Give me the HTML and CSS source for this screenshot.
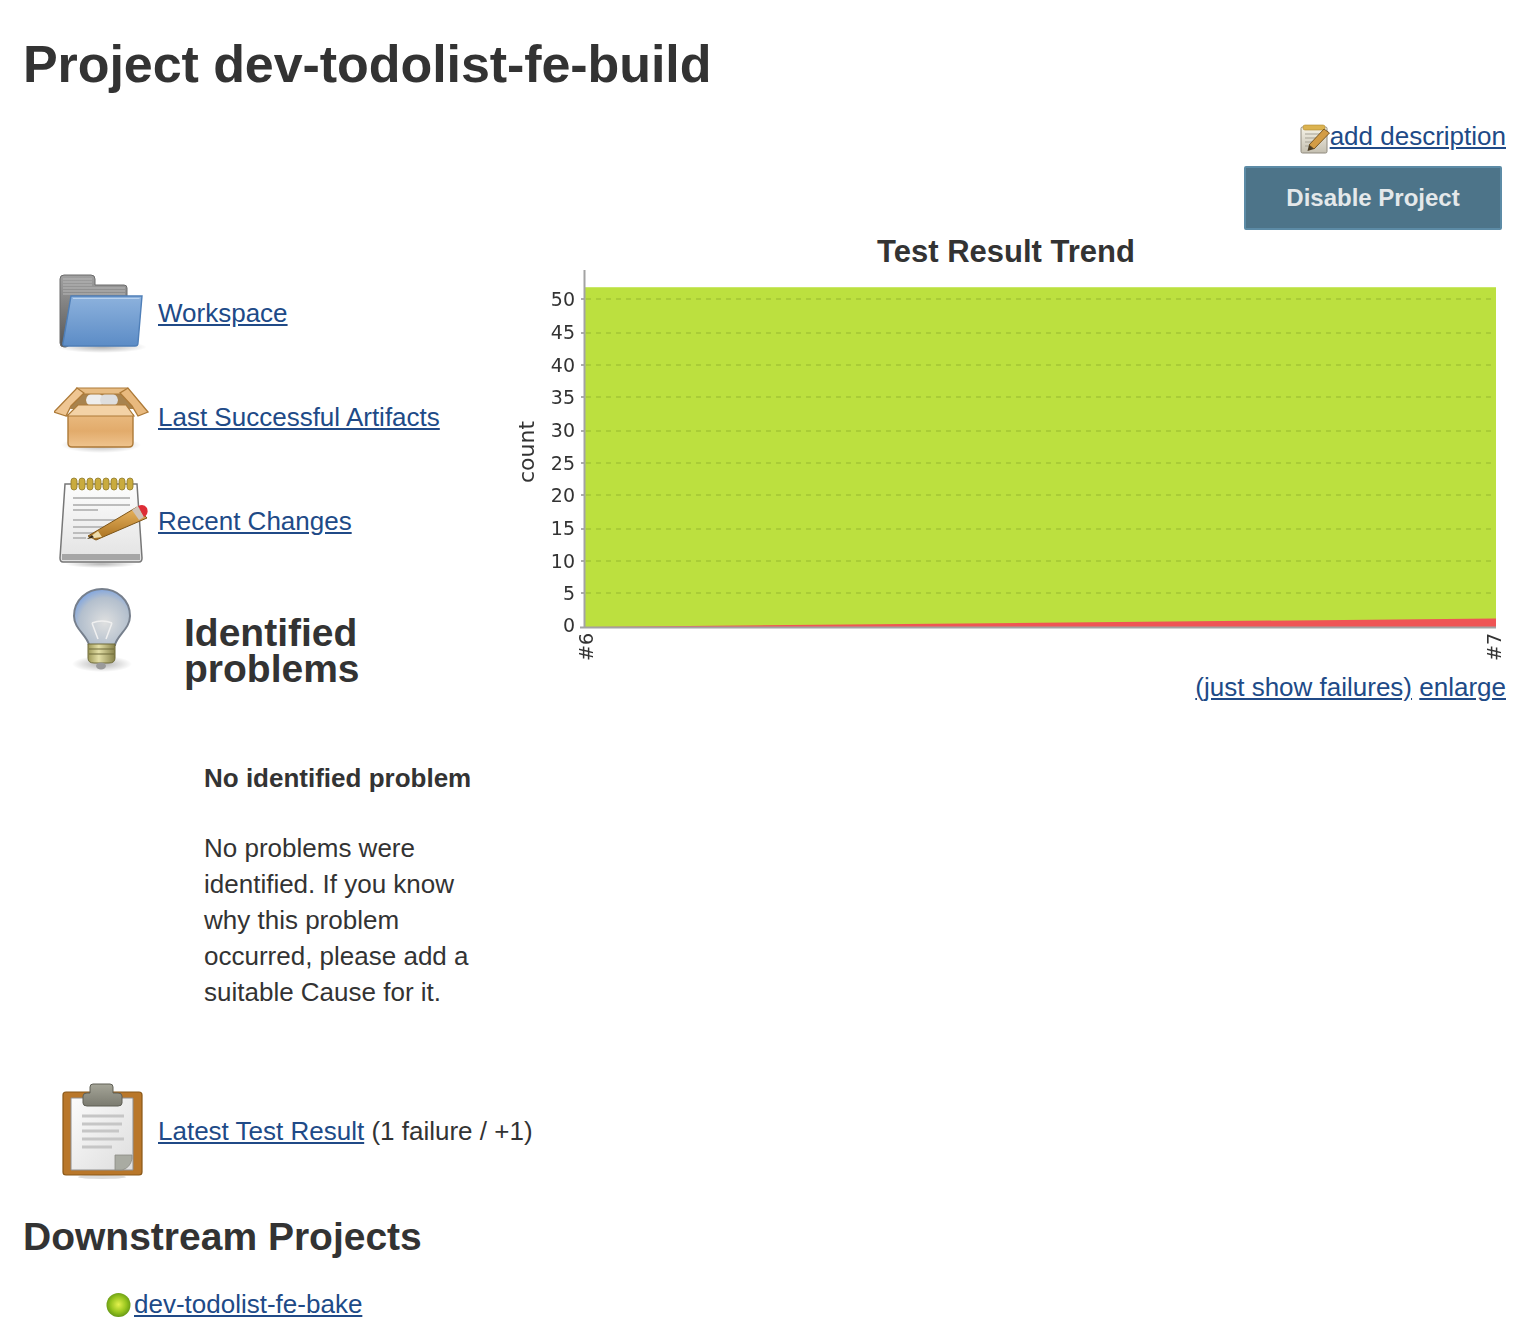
FILE: index.html
```html
<!DOCTYPE html>
<html lang="en">
<head>
<meta charset="utf-8">
<title>Project dev-todolist-fe-build</title>
<link rel="stylesheet" href="styles.css">
</head>
<body>
<h1 class="title">Project dev-todolist-fe-build</h1>
<div class="desc-row">
  <svg class="mini-note" viewBox="0 0 30 30" aria-hidden="true">
    <defs><linearGradient id="mn" x1="0" y1="0" x2="0" y2="1"><stop offset="0" stop-color="#f6f3e8"/><stop offset="1" stop-color="#c4bfb0"/></linearGradient></defs>
    <rect x="1" y="3" width="26" height="26" rx="1.5" fill="url(#mn)" stroke="#8f8a7e"/>
    <rect x="3" y="1" width="22" height="5" rx="2" fill="#dcb350" stroke="#b08a30" stroke-width=".6"/>
    <path d="M5 10h17M5 14h13M5 18h10M5 22h8" stroke="#a5a196" stroke-width="1.200"/>
    <path d="M9 21 L24 5 L29.500 9 L14 25 Z" fill="#d39c45" stroke="#6f4f1c" stroke-width=".9"/>
    <path d="M9 21 L7.500 27 L14 25 Z" fill="#4a3a20"/>
  </svg>
  <a href="#">add description</a>
</div>
<div class="btn-row"><button class="btn" type="button">Disable Project</button></div>

<div class="chart">
  <h3 class="chart-title">Test Result Trend</h3>
  <svg class="chart-svg" viewBox="506 270 1000 397" aria-label="Test result trend chart">
    <polygon points="584,287 1496,287 1496,627 584,627" fill="#bce03f"/>
    <line x1="584" y1="287.5" x2="1496" y2="287.5" stroke="#c9e86a" stroke-width="1"/>
    <polygon points="584,627 1496,618.500 1496,627" fill="#ef5555"/>
    <g class="grid">
      <line x1="586" x2="1496" y1="299" y2="299"/><line x1="586" x2="1496" y1="333" y2="333"/>
      <line x1="586" x2="1496" y1="365" y2="365"/><line x1="586" x2="1496" y1="397" y2="397"/>
      <line x1="586" x2="1496" y1="431" y2="431"/><line x1="586" x2="1496" y1="463" y2="463"/>
      <line x1="586" x2="1496" y1="495" y2="495"/><line x1="586" x2="1496" y1="529" y2="529"/>
      <line x1="586" x2="1496" y1="561" y2="561"/><line x1="586" x2="1496" y1="593" y2="593"/>
    </g>
    <g class="ticks">
      <line x1="581" x2="585" y1="299" y2="299"/><line x1="581" x2="585" y1="333" y2="333"/>
      <line x1="581" x2="585" y1="365" y2="365"/><line x1="581" x2="585" y1="397" y2="397"/>
      <line x1="581" x2="585" y1="431" y2="431"/><line x1="581" x2="585" y1="463" y2="463"/>
      <line x1="581" x2="585" y1="495" y2="495"/><line x1="581" x2="585" y1="529" y2="529"/>
      <line x1="581" x2="585" y1="561" y2="561"/><line x1="581" x2="585" y1="593" y2="593"/>
    </g>
    <line class="axis" x1="584.500" y1="270" x2="584.500" y2="628"/>
    <line class="axis" x1="580" y1="627.500" x2="1496" y2="627.500"/>
    <g class="ylab">
      <text x="575" y="306">50</text><text x="575" y="339">45</text><text x="575" y="372">40</text>
      <text x="575" y="404">35</text><text x="575" y="437">30</text><text x="575" y="470">25</text>
      <text x="575" y="502">20</text><text x="575" y="535">15</text><text x="575" y="568">10</text>
      <text x="575" y="600">5</text><text x="575" y="632">0</text>
    </g>
    <text class="count" transform="translate(534 483) rotate(-90)">count</text>
    <text class="xlab" transform="translate(593 661) rotate(-90)">#6</text>
    <text class="xlab" transform="translate(1501 661) rotate(-90)">#7</text>
  </svg>
  <div class="chart-links"><a href="#">(just show failures)</a> <a href="#">enlarge</a></div>
</div>

<div class="row first">
  <svg class="ico" viewBox="0 0 96 96" aria-hidden="true">
    <defs>
      <linearGradient id="fb" x1="0" y1="0" x2="0" y2="1"><stop offset="0" stop-color="#8db2dd"/><stop offset="1" stop-color="#5c8cc6"/></linearGradient>
      <linearGradient id="fg" x1="0" y1="0" x2="0" y2="1"><stop offset="0" stop-color="#a0a0a0"/><stop offset="1" stop-color="#555"/></linearGradient>
      <radialGradient id="sh"><stop offset="0" stop-color="#000" stop-opacity=".3"/><stop offset="1" stop-color="#000" stop-opacity="0"/></radialGradient>
    </defs>
    <ellipse cx="48" cy="82" rx="45" ry="6" fill="url(#sh)"/>
    <path d="M6 14 Q6 10 10 10 H37 Q41 10 41 14 V20 H70 Q73 20 73 23 V50 L12 82 H10 Q6 82 6 78 Z" fill="url(#fg)" stroke="#6a6a6a"/>
    <path d="M9 14H38M9 17H38M9 20H38M9 23H71M9 26H71M9 29H71" stroke="#b8b8b8" stroke-width="1"/>
    <path d="M17 31 H88 L84 78 Q84 81 81 81 H12 Q8 81 9 78 Z" fill="url(#fb)" stroke="#4f7fb8" stroke-width="1.400"/>
    <path d="M19 33.500 H85.500" stroke="#b8d2ef" stroke-width="1.200"/>
  </svg>
  <a href="#">Workspace</a>
</div>
<div class="row">
  <svg class="ico" viewBox="0 0 96 96" aria-hidden="true">
    <defs>
      <linearGradient id="bx" x1="0" y1="0" x2="0" y2="1"><stop offset="0" stop-color="#e9b97e"/><stop offset=".5" stop-color="#e2ab6b"/><stop offset="1" stop-color="#efc48e"/></linearGradient>
      <radialGradient id="sh2"><stop offset="0" stop-color="#000" stop-opacity=".3"/><stop offset="1" stop-color="#000" stop-opacity="0"/></radialGradient>
    </defs>
    <ellipse cx="47" cy="76" rx="40" ry="8" fill="url(#sh2)"/>
    <path d="M24 20 H72 L80 40 H16 Z" fill="#a8834e"/>
    <ellipse cx="41" cy="31" rx="9" ry="7" fill="#eeeeee"/><ellipse cx="55" cy="31" rx="9" ry="7" fill="#dedede"/>
    <path d="M22 19 H74 L70 25 H26 Z" fill="#e8bd84" stroke="#ad7a38" stroke-width="1"/>
    <path d="M0 43 L23 19 L30 24 L17 37 L12 47 Z" fill="#efc693" stroke="#ad7a38" stroke-width="1.300"/>
    <path d="M94 43 L74 19 L66 24 L78 37 L84 47 Z" fill="#e8b97e" stroke="#ad7a38" stroke-width="1.300"/>
    <path d="M14 46 H79 V74 Q79 78 75 78 H18 Q14 78 14 74 Z" fill="url(#bx)" stroke="#ad7a38" stroke-width="1.400"/>
    <path d="M24 36 H72 L80 47 H13 Z" fill="#f3d2a6" stroke="#ad7a38" stroke-width="1.200"/>
  </svg>
  <a href="#">Last Successful Artifacts</a>
</div>
<div class="row">
  <svg class="ico" viewBox="0 0 96 96" aria-hidden="true">
    <defs>
      <linearGradient id="np" x1="0" y1="0" x2="0" y2="1"><stop offset="0" stop-color="#fdfdfd"/><stop offset="1" stop-color="#e2e2e2"/></linearGradient>
      <linearGradient id="pc" x1="0" y1="0" x2="0" y2="1"><stop offset="0" stop-color="#eab560"/><stop offset="1" stop-color="#a8701f"/></linearGradient>
      <radialGradient id="sh3"><stop offset="0" stop-color="#000" stop-opacity=".28"/><stop offset="1" stop-color="#000" stop-opacity="0"/></radialGradient>
    </defs>
    <ellipse cx="47" cy="91" rx="36" ry="4" fill="url(#sh3)"/>
    <path d="M11 11 H83 L88 85 Q88 89 85 89 H9 Q6 89 6 85 Z" fill="url(#np)" stroke="#777" stroke-width="1.500"/>
    <path d="M8 81 H86 V87 H8 Z" fill="#a6a6a6"/>
    <g class="rings"><rect x="17" y="5" width="6" height="12" rx="3"/><rect x="25" y="5" width="6" height="12" rx="3"/><rect x="33" y="5" width="6" height="12" rx="3"/><rect x="41" y="5" width="6" height="12" rx="3"/><rect x="49" y="5" width="6" height="12" rx="3"/><rect x="57" y="5" width="6" height="12" rx="3"/><rect x="65" y="5" width="6" height="12" rx="3"/><rect x="73" y="5" width="6" height="12" rx="3"/></g>
    <path d="M19 25H76M19 32H76M19 37H44M19 47H64M19 54H52M19 60H42M19 65H32" stroke="#bcbcbc" stroke-width="2"/>
    <path d="M34 63 L83 34 L93 45 L42 67 Z" fill="url(#pc)" stroke="#7d5518" stroke-width="1"/>
    <path d="M33 66 L44 58 L48 64 Z" fill="#ecdcac"/>
    <path d="M33 66 L38 62 L40 64.500 Z" fill="#3a2c18"/>
    <path d="M78 37 L84 33 L90 44 L85 47 Z" fill="#cfc3b8"/>
    <path d="M84 33 Q90 30 93 35 Q95 41 90 44 Z" fill="#dd2d36"/>
  </svg>
  <a href="#">Recent Changes</a>
</div>
<div class="row-problems">
  <svg class="ico" viewBox="0 0 96 96" aria-hidden="true">
    <defs>
      <radialGradient id="gl" cx=".55" cy=".6" r=".62"><stop offset="0" stop-color="#dfe0e0"/><stop offset=".72" stop-color="#b3bfcd"/><stop offset="1" stop-color="#7ea4e0"/></radialGradient>
      <linearGradient id="bs" x1="0" y1="0" x2="1" y2="0"><stop offset="0" stop-color="#9d9858"/><stop offset=".4" stop-color="#e4dfa6"/><stop offset="1" stop-color="#86814a"/></linearGradient>
      <radialGradient id="sh4"><stop offset="0" stop-color="#000" stop-opacity=".3"/><stop offset="1" stop-color="#000" stop-opacity="0"/></radialGradient>
    </defs>
    <ellipse cx="48" cy="85" rx="30" ry="8" fill="url(#sh4)"/>
    <path d="M35 66 C33 56 20 50 20 37 C20 21 33 10 48 10 C63 10 76 21 76 37 C76 50 63 56 61 66 Z" fill="url(#gl)" stroke="#767f8c" stroke-width="2"/>
    <path d="M38 44 L44 60 M58 44 L52 60 M38 44 Q48 40 58 44" stroke="#f0f0f0" stroke-width="1.500" fill="none"/>
    <path d="M34 65 H61 V79 Q61 84 55 84 H40 Q34 84 34 79 Z" fill="url(#bs)" stroke="#6f6b3a" stroke-width="1"/>
    <path d="M35 70 H60 M35 75 H60" stroke="#6f6b3a" stroke-width="1"/>
    <ellipse cx="47" cy="87" rx="5" ry="3.500" fill="#9a9a9a"/>
  </svg>
  <h2 class="problems-title">Identified problems</h2>
</div>
<div class="problems-body">
  <b class="problems-lead">No identified problem</b>
  No problems were identified. If you know why this problem occurred, please add a suitable Cause for it.
</div>
<div class="row">
  <svg class="ico" viewBox="0 0 96 96" aria-hidden="true">
    <defs>
      <linearGradient id="cp" x1="0" y1="0" x2="1" y2="1"><stop offset="0" stop-color="#fbfbfb"/><stop offset="1" stop-color="#dedede"/></linearGradient>
      <linearGradient id="cl" x1="0" y1="0" x2="0" y2="1"><stop offset="0" stop-color="#a5a598"/><stop offset="1" stop-color="#7b7b70"/></linearGradient>
    </defs>
    <ellipse cx="48" cy="94" rx="24" ry="2" fill="#dcdcdc"/>
    <rect x="9" y="9" width="79" height="83" rx="3" fill="#b9772a" stroke="#8a5818" stroke-width="1.200"/>
    <path d="M17 15 H79 V87 H17 Z" fill="url(#cp)" stroke="#8f8f8f"/>
    <path d="M28 33H70M28 41H68M28 48H65M28 56H70M28 64H58" stroke="#c6c6c6" stroke-width="3"/>
    <path d="M61 87 V72 H78 V76 Q76 85 68 87 Z" fill="#a9aba2" stroke="#8c8c84" stroke-width=".8"/>
    <path d="M29 20 V13 Q29 10 33 10 H36 V4 Q36 1 39 1 H56 Q59 1 59 4 V10 H64 Q68 10 68 13 V20 Q68 23 64 23 H33 Q29 23 29 20 Z" fill="url(#cl)" stroke="#5f5f55" stroke-width="1"/>
  </svg>
  <span><a href="#">Latest Test Result</a> (1 failure / +1)</span>
</div>
<h2 class="sub">Downstream Projects</h2>
<ul class="down">
  <li>
    <svg class="ball" viewBox="0 0 28 28" aria-hidden="true">
      <defs><radialGradient id="bl" cx=".5" cy=".48" r=".55"><stop offset="0" stop-color="#e4f24e"/><stop offset=".6" stop-color="#96c41e"/><stop offset="1" stop-color="#5f9214"/></radialGradient></defs>
      <circle cx="12.500" cy="14" r="12" fill="url(#bl)"/>
    </svg><a href="#">dev-todolist-fe-bake</a>
  </li>
</ul>
</body>
</html>
```
FILE: styles.css
```css
html, body { background: #fff; }
body {
  margin: 0;
  padding: 0 26px 0 23px;
  font: 26px/36px "Liberation Sans", Arial, sans-serif;
  color: #333;
}
a { color: #204a87; text-decoration: underline; }
.title { font-size: 52px; letter-spacing: -.07px; line-height: 60px; margin: 0; padding-top: 34px; font-weight: 700; }
.desc-row { display: flex; justify-content: flex-end; align-items: flex-start; margin-top: 24px; height: 36px; }
.mini-note { width: 30px; height: 30px; margin-top: 6px; filter: blur(.4px); }
.btn-row { display: flex; justify-content: flex-end; margin-top: 12px; padding-right: 4px; }
.btn {
  width: 258px; height: 64px; padding: 0;
  background: #4d7489; border: 2px solid #5c8ba6; border-radius: 2px;
  color: #e4e8ea; font: 700 24px "Liberation Sans", Arial, sans-serif;
}
.chart { float: right; width: 1000px; }
.chart-title { font-size: 31px; line-height: 36px; margin: 0; padding-top: 4px; text-align: center; font-weight: 700; }
.chart-svg { display: block; width: 1000px; height: 397px; filter: blur(.45px); }
.grid line { stroke: #a2c536; stroke-width: 1.400; stroke-dasharray: 5 5; }
.ticks line { stroke: #8a8a8a; stroke-width: 1.400; }
.axis { stroke: #a3a3a3; stroke-width: 2; }
.ylab text { font: 19px "DejaVu Sans", sans-serif; text-anchor: end; fill: #333; }
.count { font: 22px "DejaVu Sans", sans-serif; fill: #333; }
.xlab { font: 19px "DejaVu Sans", sans-serif; fill: #333; }
.chart-links { text-align: right; margin-top: 2px; }
.row { display: flex; align-items: center; gap: 8px; height: 104px; margin-left: 31px; }
.first { margin-top: 31px; }
.ico { width: 96px; height: 96px; flex: none; filter: blur(.6px); }
.rings rect { fill: #c9ab3e; stroke: #8f7a2a; stroke-width: .8; }
.row-problems { display: flex; margin-left: 31px; gap: 34px; margin-top: 6px; }
.problems-title { font-size: 39px; line-height: 36px; margin: 0; padding-top: 36px; width: 230px; font-weight: 700; }
.problems-body { margin: 0 0 0 181px; padding-top: 73px; width: 276px; padding-bottom: 69px; }
.problems-lead { display: block; margin-bottom: 34px; }
.sub { font-size: 39px; line-height: 46px; margin: 31px 0 0; font-weight: 700; }
.down { list-style: none; margin: 26px 0 0; padding: 0 0 0 83px; }
.down li { display: flex; align-items: center; }
.ball { width: 28px; height: 28px; flex: none; margin-top: 2px; filter: blur(.5px); }
```
